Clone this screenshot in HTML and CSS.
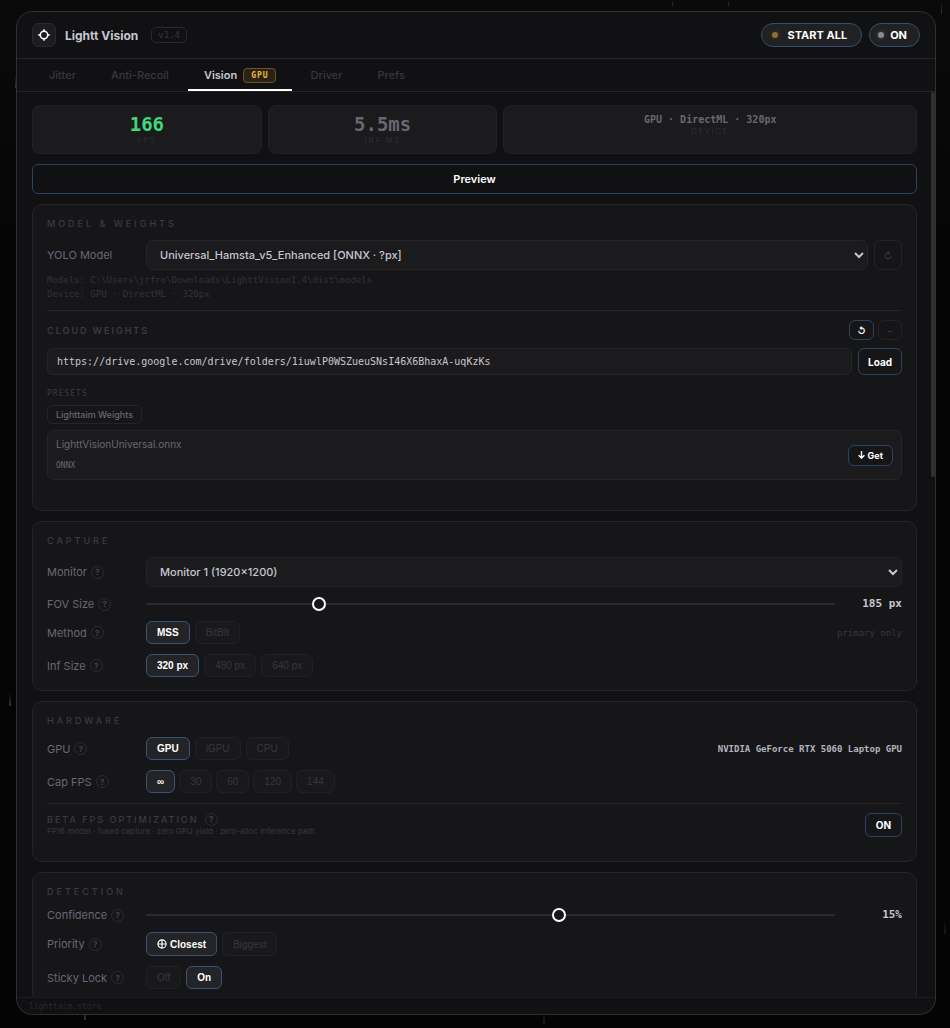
FILE: index.html
```html
<!DOCTYPE html>
<html lang="en">
<head>
<meta charset="utf-8">
<title>Lightt Vision</title>
<link rel="stylesheet" href="styles.css">
</head>
<body>
<div class="window">
  <header class="titlebar">
    <span class="logo">
      <svg width="14" height="14" viewBox="0 0 14 14" fill="none" stroke="#fff"><circle cx="7" cy="7" r="3.7" stroke-width="1.5"/><path d="M7 1.2v2.4M7 10.4v2.4M1.2 7h2.4M10.4 7h2.4" stroke-width="1.5"/></svg>
    </span>
    <h1 class="app-name">Lightt Vision</h1>
    <span class="version">v1.4</span>
    <div class="title-actions">
      <button class="pill" type="button"><span class="dot dot-amber"></span>START ALL</button>
      <button class="pill pill-small" type="button"><span class="dot"></span>ON</button>
    </div>
  </header>
  <nav class="tabs">
    <button class="tab" type="button">Jitter</button>
    <button class="tab" type="button">Anti-Recoil</button>
    <button class="tab tab-active" type="button">Vision<span class="badge">GPU</span></button>
    <button class="tab" type="button">Driver</button>
    <button class="tab" type="button">Prefs</button>
  </nav>
  <div class="viewport">
    <main class="content">
      <div class="stats">
        <div class="stat"><span class="stat-value stat-good">166</span><span class="stat-label">FPS</span></div>
        <div class="stat"><span class="stat-value">5.5ms</span><span class="stat-label">INF MS</span></div>
        <div class="stat"><span class="stat-value stat-text">GPU · DirectML · 320px</span><span class="stat-label">DEVICE</span></div>
      </div>
      <button class="preview" type="button">Preview</button>

      <section class="card card-model">
        <h2 class="card-title">MODEL &amp; WEIGHTS</h2>
        <div class="row">
          <label class="label" for="model">YOLO Model</label>
          <div class="field">
            <select class="select" id="model"><option>Universal_Hamsta_v5_Enhanced [ONNX · ?px]</option></select>
            <button class="icon-btn icon-btn-large" type="button" aria-label="Refresh models">↻</button>
          </div>
        </div>
        <p class="hint">Models: C:\Users\jrfro\Downloads\LighttVision1.4\dist\models<br>Device: GPU · DirectML · 320px</p>
        <hr class="rule">
        <div class="bar">
          <h3 class="card-title sub-title">CLOUD WEIGHTS</h3>
          <div class="bar-actions">
            <button class="icon-btn icon-btn-on" type="button" aria-label="Reload">↺</button>
            <button class="icon-btn" type="button" aria-label="Collapse">–</button>
          </div>
        </div>
        <div class="url-row">
          <input class="url" type="text" aria-label="Cloud folder URL" value="https://drive.google.com/drive/folders/1iuwlP0WSZueuSNsI46X6BhaxA-uqKzKs">
          <button class="outline-btn" type="button">Load</button>
        </div>
        <p class="presets">PRESETS</p>
        <button class="chip" type="button">Lighttaim Weights</button>
        <div class="item">
          <div class="item-text"><span class="item-name">LighttVisionUniversal.onnx</span><span class="item-kind">ONNX</span></div>
          <button class="outline-btn get-btn" type="button"><svg width="7" height="8" viewBox="0 0 7 8" fill="none" stroke="#fff" stroke-width="1.4"><path d="M3.5 0v7M.6 4.2l2.9 2.9 2.9-2.9"/></svg>Get</button>
        </div>
      </section>

      <section class="card card-stack">
        <h2 class="card-title">CAPTURE</h2>
        <div class="row">
          <label class="label" for="monitor">Monitor <span class="help">?</span></label>
          <div class="field"><select class="select" id="monitor"><option>Monitor 1 (1920×1200)</option></select></div>
        </div>
        <div class="row">
          <label class="label" for="fov">FOV Size <span class="help">?</span></label>
          <input class="slider" id="fov" type="range" min="0" max="1000" value="246">
          <output class="value" for="fov">185 px</output>
        </div>
        <div class="row">
          <span class="label">Method <span class="help">?</span></span>
          <div class="options">
            <button class="option option-on" type="button">MSS</button>
            <button class="option" type="button">BitBlt</button>
          </div>
          <span class="note">primary only</span>
        </div>
        <div class="row">
          <span class="label">Inf Size <span class="help">?</span></span>
          <div class="options">
            <button class="option option-on" type="button">320 px</button>
            <button class="option" type="button">480 px</button>
            <button class="option" type="button">640 px</button>
          </div>
        </div>
      </section>

      <section class="card card-stack">
        <h2 class="card-title">HARDWARE</h2>
        <div class="row">
          <span class="label">GPU <span class="help">?</span></span>
          <div class="options">
            <button class="option option-on" type="button">GPU</button>
            <button class="option" type="button">iGPU</button>
            <button class="option" type="button">CPU</button>
          </div>
          <span class="note note-strong">NVIDIA GeForce RTX 5060 Laptop GPU</span>
        </div>
        <div class="row">
          <span class="label">Cap FPS <span class="help">?</span></span>
          <div class="options options-tight">
            <button class="option option-on" type="button">∞</button>
            <button class="option" type="button">30</button>
            <button class="option" type="button">60</button>
            <button class="option" type="button">120</button>
            <button class="option" type="button">144</button>
          </div>
        </div>
        <div class="beta">
          <div class="beta-text">
            <h3 class="card-title beta-title">BETA FPS OPTIMIZATION <span class="help">?</span></h3>
            <p class="beta-note">FP16 model · fused capture · zero GPU yield · zero-alloc inference path</p>
          </div>
          <button class="outline-btn beta-btn" type="button">ON</button>
        </div>
      </section>

      <section class="card card-stack">
        <h2 class="card-title">DETECTION</h2>
        <div class="row">
          <label class="label" for="confidence">Confidence <span class="help">?</span></label>
          <input class="slider" id="confidence" type="range" min="0" max="1000" value="601">
          <output class="value" for="confidence">15%</output>
        </div>
        <div class="row">
          <span class="label">Priority <span class="help">?</span></span>
          <div class="options">
            <button class="option option-tall option-on" type="button"><svg width="10" height="10" viewBox="0 0 10 10" fill="none" stroke="#fff" stroke-width="1.2"><circle cx="5" cy="5" r="4.1"/><path d="M5 1v8M1 5h8"/></svg>Closest</button>
            <button class="option option-tall" type="button">Biggest</button>
          </div>
        </div>
        <div class="row">
          <span class="label">Sticky Lock <span class="help">?</span></span>
          <div class="options">
            <button class="option" type="button">Off</button>
            <button class="option option-on" type="button">On</button>
          </div>
        </div>
      </section>
    </main>
    <div class="thumb"></div>
  </div>
  <footer class="footer">lighttaim.store</footer>
</div>
</body>
</html>
```
FILE: styles.css
```css
:root {
  --panel: #111113;
  --card: #161618;
  --raised: #1b1b1d;
  --line: #252528;
  --blue: #2b4361;
  --faint: #363740;
  --label: #676873;
  --text: #c6c7d0;
  --mono: "DejaVu Sans Mono", "Liberation Mono", monospace;
  --streak: linear-gradient(#0000, #333);
}
* { box-sizing: border-box; }
body {
  margin: 0;
  height: 100vh;
  padding: 11px 14px 13px 16px;
  background:
    var(--streak) 672px 0 / 1px 6px no-repeat,
    var(--streak) 728px 0 / 1px 6px no-repeat,
    var(--streak) 941px 0 / 1px 14px no-repeat,
    var(--streak) 15px 74px / 1px 14px no-repeat,
    var(--streak) 9px 692px / 2px 14px no-repeat,
    var(--streak) 84px 1008px / 2px 12px no-repeat,
    linear-gradient(#0000, #1c1c1e) 543px 1010px / 2px 14px no-repeat,
    linear-gradient(#0000, #18181a) 944px 918px / 2px 16px no-repeat,
    linear-gradient(#0a0a0b, #050506 25%, #040405);
  font-family: Inter, sans-serif;
  color: var(--text);
}
h1, h2, h3, p { margin: 0; }
button, input, select { font-family: inherit; }
button { padding: 0; }

.window {
  display: flex;
  flex-direction: column;
  height: 100%;
  overflow: hidden;
  background: var(--panel);
  border: 1px solid #303033;
  border-radius: 16px;
}
.titlebar {
  display: flex;
  align-items: center;
  flex: none;
  height: 47px;
  padding: 0 15px;
  border-bottom: 1px solid var(--line);
}
.logo {
  display: grid;
  place-items: center;
  width: 24px;
  height: 24px;
  background: #1d1d1f;
  border: 1px solid #29292c;
  border-radius: 6px;
}
.app-name { margin-left: 9px; font-size: 12px; font-weight: 700; }
.version {
  margin-left: 13px;
  padding: 0 6px;
  border: 1px solid #29292c;
  border-radius: 5px;
  color: var(--faint);
  font: 9px/14px var(--mono);
}
.title-actions { display: flex; gap: 7px; margin-left: auto; }
.pill {
  display: flex;
  align-items: center;
  gap: 10px;
  height: 24px;
  padding: 0 14px 0 10px;
  background: #212123;
  border: 1px solid #31506f;
  border-radius: 12px;
  color: #fff;
  font-size: 11px;
  font-weight: 700;
}
.pill-small { gap: 6px; padding: 0 12px 0 8px; }
.dot { width: 6px; height: 6px; border-radius: 50%; background: #8b8b8f; box-shadow: 0 0 5px #55555a; }
.dot-amber { background: #8f7030; box-shadow: 0 0 5px #4d3e20; }

.tabs {
  display: flex;
  flex: none;
  gap: 3px;
  height: 33px;
  padding-left: 16px;
  border-bottom: 1px solid var(--line);
}
.tab {
  display: flex;
  align-items: center;
  gap: 6px;
  padding: 0 16px;
  background: none;
  border: 0;
  color: var(--faint);
  font-size: 11px;
  font-weight: 500;
}
.tab-active { color: var(--text); font-weight: 600; box-shadow: inset 0 -2px #fff; }
.badge {
  padding: 1px 6px 0 7px;
  background: #2a2315;
  border: 1px solid #6a5424;
  border-radius: 4px;
  color: #f0b93a;
  font: bold 8px/12px var(--mono);
  letter-spacing: 1px;
}

.viewport { position: relative; flex: 1; min-height: 0; }
.content {
  display: flex;
  flex-direction: column;
  gap: 10px;
  height: 100%;
  padding: 13px 18px 13px 15px;
  overflow-y: auto;
  scrollbar-width: none;
}
.content > * { flex: none; }
.thumb { position: absolute; top: 0; right: 0; width: 4px; height: 385px; border-radius: 2px; background: #303033; }

.stats { display: grid; grid-template-columns: 5fr 5fr 9fr; gap: 6px; }
.stat {
  display: flex;
  flex-direction: column;
  align-items: center;
  height: 49px;
  padding-top: 6px;
  background: var(--raised);
  border: 1px solid #222225;
  border-radius: 8px;
}
.stat-value { color: var(--label); font: bold 19px/24px var(--mono); }
.stat-good { color: #42d67c; }
.stat-text { font-size: 10px; line-height: 15px; }
.stat-label { color: #303037; font-size: 7px; line-height: 10px; letter-spacing: 2px; }
.preview {
  height: 30px;
  background: var(--panel);
  border: 1px solid var(--blue);
  border-radius: 6px;
  color: #fff;
  font-size: 11px;
  font-weight: 600;
}

.card { padding: 14px 14px 13px; background: var(--card); border: 1px solid var(--line); border-radius: 10px; }
.card-model { padding-bottom: 30px; }
.card-model > .row { margin-top: 10px; }
.card-stack { display: flex; flex-direction: column; gap: 10px; }
.card-title { padding-bottom: 2px; color: #3a3b43; font-size: 9px; line-height: 9px; font-weight: 500; letter-spacing: 3px; }
.row { display: flex; align-items: center; gap: 10px; }
.label { display: flex; align-items: center; gap: 4px; flex: none; width: 89px; height: 14px; color: var(--label); font-size: 11px; white-space: nowrap; }
.help {
  display: grid;
  place-items: center;
  width: 13px;
  height: 13px;
  border: 1px solid #2c2c31;
  border-radius: 50%;
  color: #46464e;
  font-size: 8px;
  font-weight: 600;
  letter-spacing: 0;
}
.field { display: flex; flex: 1; gap: 6px; }
.select {
  flex: 1;
  min-width: 0;
  height: 30px;
  padding: 0 0 0 9px;
  background: var(--raised);
  border: 1px solid var(--line);
  border-radius: 7px;
  color: var(--text);
  font-size: 11px;
  font-weight: 500;
}
.icon-btn {
  width: 24px;
  height: 20px;
  background: none;
  border: 1px solid #232326;
  border-radius: 6px;
  color: #3b3b42;
  font-size: 9px;
}
.icon-btn-on { width: 25px; border-color: var(--blue); color: #fff; font-weight: 700; }
.icon-btn-large { width: 28px; height: 30px; }
.hint { margin-top: 3px; color: #333339; font: 9px/14px var(--mono); }
.rule { height: 1px; margin: 9px 0; border: 0; background: var(--line); }
.bar { display: flex; align-items: center; justify-content: space-between; }
.bar-actions { display: flex; gap: 4px; }
.sub-title { padding: 0; font-weight: 600; letter-spacing: 2px; }
.url-row { display: flex; gap: 6px; margin-top: 8px; }
.url {
  flex: 1;
  min-width: 0;
  height: 27px;
  padding: 0 9px;
  background: var(--raised);
  border: 1px solid var(--line);
  border-radius: 6px;
  color: var(--text);
  font: 10px var(--mono);
}
.outline-btn {
  padding: 0 9px;
  background: var(--card);
  border: 1px solid var(--blue);
  border-radius: 6px;
  color: #fff;
  font-size: 10px;
  font-weight: 700;
}
.presets { margin: 14px 0 6px; color: #3b3b42; font: 8px/10px var(--mono); letter-spacing: 1px; }
.chip {
  display: block;
  height: 19px;
  padding: 0 8px;
  background: none;
  border: 1px solid var(--line);
  border-radius: 5px;
  color: var(--label);
  font-size: 9px;
  font-weight: 500;
}
.item {
  display: flex;
  align-items: center;
  justify-content: space-between;
  height: 50px;
  margin-top: 6px;
  padding: 0 8px;
  background: var(--raised);
  border: 1px solid var(--line);
  border-radius: 7px;
}
.item-text { display: flex; flex-direction: column; gap: 10px; color: var(--label); }
.item-name { font-size: 10px; line-height: 12px; }
.item-kind { font: 8px/12px var(--mono); }
.get-btn { display: flex; align-items: center; gap: 3px; height: 21px; font-size: 9px; }

.slider { flex: 1; min-width: 0; height: 14px; margin: 0; appearance: none; background: none; }
.slider::-webkit-slider-runnable-track { height: 2px; border-radius: 1px; background: #2b2b2e; }
.slider::-webkit-slider-thumb {
  appearance: none;
  width: 14px;
  height: 14px;
  margin-top: -6px;
  background: var(--card);
  border: 2px solid #fff;
  border-radius: 50%;
}
.value { width: 57px; text-align: right; font: bold 11px/14px var(--mono); }
.options { display: flex; gap: 5px; }
.options-tight { gap: 4px; }
.option {
  display: flex;
  align-items: center;
  gap: 3px;
  height: 23px;
  padding: 0 10px;
  background: #19191b;
  border: 1px solid #212124;
  border-radius: 6px;
  color: var(--faint);
  font: 10px "Liberation Sans", Arial, sans-serif;
}
.option-tall { height: 24px; }
.option-on { background: #242427; border-color: #38537a; color: #fff; font-weight: 700; }
.note { margin-left: auto; color: var(--faint); font: 9px var(--mono); }
.note-strong { color: #b4b4bd; font-weight: bold; }
.beta {
  display: flex;
  align-items: flex-start;
  justify-content: space-between;
  padding: 9px 0 11px;
  border-top: 1px solid var(--line);
}
.beta-title { display: flex; align-items: center; gap: 6px; height: 13px; padding: 0; letter-spacing: 2px; }
.beta-note { color: #37373d; font-size: 8px; line-height: 11px; }
.beta-btn { height: 24px; padding: 0 10px; }

.footer {
  flex: none;
  height: 17px;
  padding-left: 12px;
  border-top: 1px solid #1d1d20;
  color: #29292d;
  font: 8px/17px var(--mono);
}
```
